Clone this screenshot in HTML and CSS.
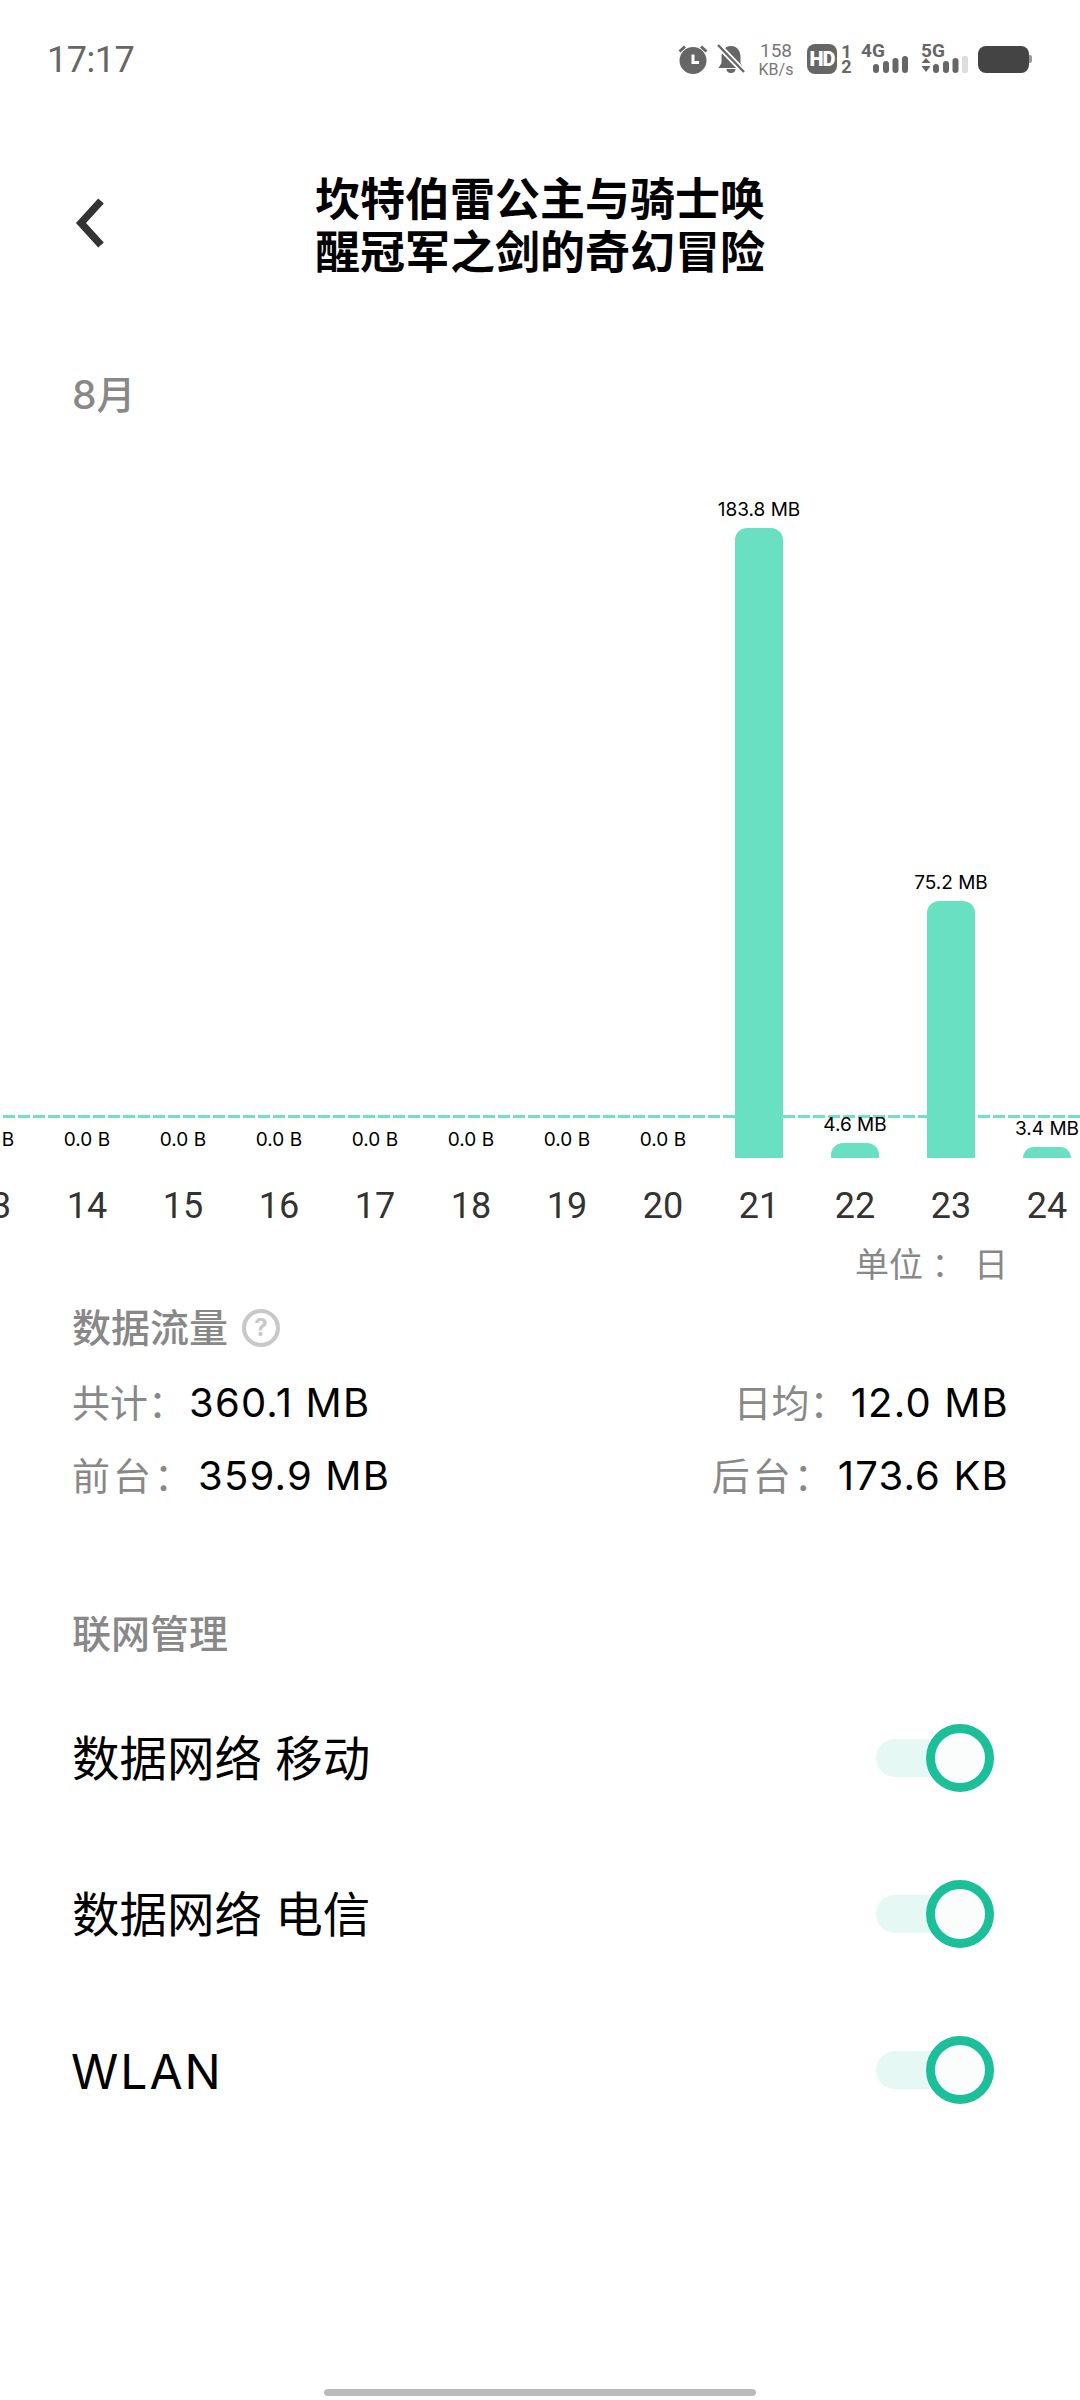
FILE: index.html
```html
<!DOCTYPE html>
<html lang="zh-CN">
<head>
<meta charset="utf-8">
<title>流量详情</title>
<link rel="stylesheet" href="styles.css">
</head>
<body>
<div class="page">
  <div class="status">
    <span class="time">17:17</span>
    <div class="status-icons">
      <svg class="ic-alarm" width="30" height="30" viewBox="0 0 30 30"><circle cx="15" cy="16.5" r="13.5" fill="#666"/><path d="M1.500 7.500 7 2.500M28.500 7.500 23 2.500" stroke="#666" stroke-width="3" fill="none"/><path d="M15 10.500V18.500H21" stroke="#fff" stroke-width="3" fill="none"/></svg>
      <svg class="ic-bell" width="28" height="30" viewBox="0 0 28 30"><path d="M14 2C7 2 4.500 8 4.500 13V19L1.500 24H26.500L23.500 19V13C23.500 8 21 2 14 2ZM9.500 25C9.500 28 12 29 14 29S18.500 28 18.500 25Z" fill="#666"/><path d="M1 1 27 28" stroke="#fff" stroke-width="6"/><path d="M1 1 27 28" stroke="#666" stroke-width="2.400"/></svg>
      <div class="speed"><span class="speed-num">158</span><span class="speed-unit">KB/s</span></div>
      <span class="hd">HD</span>
      <div class="sims"><span>1</span><span>2</span></div>
      <svg class="ic-net" width="47" height="40" viewBox="0 -4 47 40"><text x="0" y="14" class="net-text">4G</text><g fill="#666"><rect x="12" y="21" width="6" height="9" rx="3"/><rect x="22" y="18" width="6" height="12" rx="3"/><rect x="31.500" y="15" width="6" height="15" rx="3"/><rect x="41" y="13" width="6" height="17" rx="3"/></g></svg>
      <svg class="ic-net last" width="48" height="40" viewBox="0 -4 48 40"><text x="0" y="14" class="net-text">5G</text><path d="M5 15 9.500 20H.5ZM.5 23H9.500L5 29Z" fill="#666"/><g fill="#666"><rect x="12" y="21" width="6" height="9" rx="3"/><rect x="22" y="18" width="6" height="12" rx="3"/><rect x="31.500" y="15" width="6" height="15" rx="3"/></g><rect x="41" y="13" width="6" height="17" rx="2" fill="#ddd"/></svg>
      <div class="battery"><span class="battery-body"></span><span class="battery-nub"></span></div>
    </div>
  </div>

  <header class="header">
    <svg class="back" width="36" height="52" viewBox="0 0 36 52"><path d="M29 4 9 26 29 48" fill="none" stroke="#333" stroke-width="7.500"/></svg>
    <h1 class="title">坎特伯雷公主与骑士唤醒冠军之剑的奇幻冒险</h1>
    <span></span>
  </header>

  <div class="month">8月</div>

  <section class="chart">
    <div class="bars">
      <div class="col"><span class="val">0.0 B</span></div>
      <div class="col"><span class="val">0.0 B</span></div>
      <div class="col"><span class="val">0.0 B</span></div>
      <div class="col"><span class="val">0.0 B</span></div>
      <div class="col"><span class="val">0.0 B</span></div>
      <div class="col"><span class="val">0.0 B</span></div>
      <div class="col"><span class="val">0.0 B</span></div>
      <div class="col"><span class="val">0.0 B</span></div>
      <div class="col"><span class="val">183.8 MB</span><div class="bar" style="height:630px"></div></div>
      <div class="col"><span class="val">4.6 MB</span><div class="bar" style="height:15px"></div></div>
      <div class="col"><span class="val">75.2 MB</span><div class="bar" style="height:257px"></div></div>
      <div class="col"><span class="val">3.4 MB</span><div class="bar" style="height:11px"></div></div>
    </div>
    <div class="avg-line"></div>
    <div class="days">
      <span>13</span><span>14</span><span>15</span><span>16</span><span>17</span><span>18</span><span>19</span><span>20</span><span>21</span><span>22</span><span>23</span><span>24</span>
    </div>
  </section>

  <div class="unit">单位<span class="colon">：</span><span class="unit-val">日</span></div>

  <div class="section-head first">数据流量<span class="help">?</span></div>

  <div class="stat-row first">
    <div class="stat"><span class="lab">共计<span class="colon">：</span></span><span class="num">360.1 MB</span></div>
    <div class="stat"><span class="lab">日均<span class="colon">：</span></span><span class="num">12.0 MB</span></div>
  </div>
  <div class="stat-row second">
    <div class="stat"><span class="lab wide">前台<span class="colon">：</span></span><span class="num">359.9 MB</span></div>
    <div class="stat"><span class="lab wide">后台<span class="colon">：</span></span><span class="num">173.6 KB</span></div>
  </div>

  <div class="section-head manage">联网管理</div>

  <div class="rows">
    <div class="row"><span class="cjk">数据网络 移动</span><div class="toggle"><span class="track"></span><span class="thumb"></span></div></div>
    <div class="row"><span class="cjk">数据网络 电信</span><div class="toggle"><span class="track"></span><span class="thumb"></span></div></div>
    <div class="row"><span class="latin">WLAN</span><div class="toggle"><span class="track"></span><span class="thumb"></span></div></div>
  </div>

  <div class="home-bar"></div>
</div>
</body>
</html>
```

FILE: styles.css
```css
* { box-sizing: border-box; }
html, body { margin: 0; padding: 0; background: #fff; }
body { font-family: Inter, "Noto Sans CJK SC", sans-serif; color: #000; }
.page { width: 1080px; height: 2400px; overflow: hidden; }

.status { height: 118px; padding: 0 48px 0 47px; display: flex; align-items: center; justify-content: space-between; }
.time { font-family: Roboto, sans-serif; font-size: 36px; color: #666; letter-spacing: -0.5px; margin-top: 2px; }
.status-icons { display: flex; align-items: center; }
.ic-alarm { margin-right: 9px; }
.ic-bell { margin-right: 13px; }
.speed { display: flex; flex-direction: column; align-items: center; width: 36px; margin-right: 13px; color: #777; font-family: Roboto, sans-serif; }
.speed-num { font-size: 19px; line-height: 18px; }
.speed-unit { font-size: 16px; line-height: 15px; margin-top: 2px; }
.hd { width: 30px; height: 30px; border-radius: 8px; background: #666; color: #fff; font: 900 20px/30px Roboto, sans-serif; letter-spacing: -1px; text-align: center; margin-right: 5px; }
.sims { display: flex; flex-direction: column; align-items: center; width: 9px; margin-right: 10px; color: #666; font: 700 18px/15px Roboto, sans-serif; }
.ic-net { margin-right: 13px; overflow: visible; }
.ic-net.last { margin-right: 9px; }
.net-text { font: 700 19px Roboto, sans-serif; fill: #666; }
.battery { display: flex; align-items: center; }
.battery-body { width: 51px; height: 27px; border-radius: 8px; background: #444; }
.battery-nub { width: 3px; height: 8px; background: #999; border-radius: 0 2px 2px 0; }

.header { margin-top: 52px; display: grid; grid-template-columns: 1fr auto 1fr; align-items: center; }
.back { margin-left: 72px; }
.title { margin: 0; width: 452px; font-size: 45px; line-height: 53px; font-weight: 700; text-align: center; font-family: "Noto Sans CJK SC", sans-serif; }

.month { margin: 96px 0 0 72px; font-size: 39px; line-height: 46px; font-weight: 500; color: #888; }

.chart { position: relative; overflow: hidden; }
.bars { display: grid; grid-template-columns: repeat(12, 96px); height: 740px; margin-left: -57px; position: relative; z-index: 1; }
.col { display: flex; flex-direction: column; align-items: center; justify-content: flex-end; }
.val { font-size: 19px; line-height: 22px; margin-bottom: 7px; white-space: nowrap; }
.bar { width: 48px; background: #6ae0c3; border-radius: 12px 12px 0 0; }
.avg-line { position: absolute; left: 0; right: 0; top: 697px; height: 3px; background: repeating-linear-gradient(90deg, transparent 0 3px, #72dfc8 3px 15px); }
.days { display: grid; grid-template-columns: repeat(12, 96px); margin: 26px 0 0 -57px; font-family: Roboto, sans-serif; font-size: 36px; line-height: 44px; color: #333; text-align: center; }

.unit { margin-top: 17px; padding-right: 72px; display: flex; justify-content: flex-end; font-size: 34px; line-height: 40px; color: #888; }
.colon { font-family: "Noto Sans CJK TC", sans-serif; }
.unit-val { margin-left: 17px; }

.section-head { margin-left: 72px; font-size: 39px; line-height: 46px; font-weight: 500; color: #888; display: flex; align-items: center; }
.section-head.first { margin-top: 20px; }
.help { width: 38px; height: 38px; margin-left: 14px; border: 4px solid #c8c8c8; border-radius: 50%; color: #c8c8c8; font-size: 24px; line-height: 30px; font-weight: 700; text-align: center; }

.stat-row { display: flex; justify-content: space-between; padding: 0 71px 0 72px; font-size: 38px; line-height: 50px; }
.stat-row.first { margin-top: 25px; }
.stat-row.second { margin-top: 21px; }
.lab { color: #888; }
.lab.wide { letter-spacing: 3px; }
.num { color: #000; margin-left: 3px; font-size: 40px; letter-spacing: 1.200px; }

.section-head.manage { margin-top: 110px; }

.rows { margin-top: 24px; }
.row { height: 156px; padding: 0 86px 0 72px; display: flex; align-items: center; justify-content: space-between; font-size: 47.500px; }
.cjk { margin-bottom: 7px; }
.latin { font-size: 48px; letter-spacing: 2px; margin-left: -1px; }
.toggle { position: relative; width: 118px; height: 68px; display: flex; align-items: center; margin-bottom: 3px; }
.track { width: 90px; height: 38px; border-radius: 19px; background: #e6f8f3; }
.thumb { position: absolute; right: 0; top: 0; width: 68px; height: 68px; border: 9px solid #1dbf9b; border-radius: 50%; background: #fafdfc; }

.home-bar { width: 432px; height: 7px; margin: 240px auto 0; border-radius: 4px; background: #bbb; }
```
